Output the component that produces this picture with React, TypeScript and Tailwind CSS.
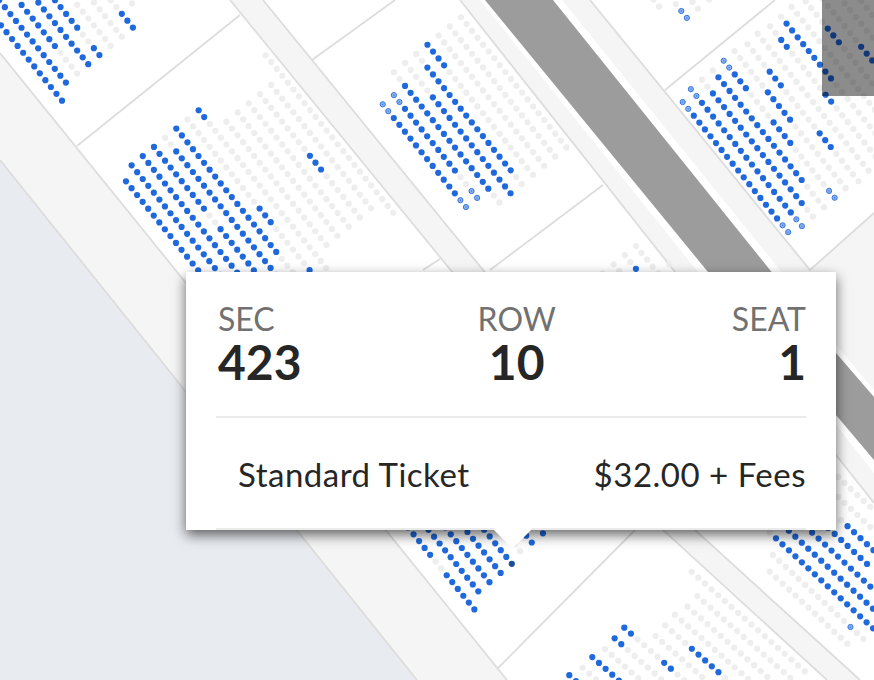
type Col = [number, number, string];

interface Section {
  o: [number, number];
  u: [number, number];
  v: [number, number];
  cols: Col[];
}

const U: [number, number] = [5.55, 6.85];
const V: [number, number] = [11.17, -9.17];

// each column is a run-length list of seats: b blue, g grey, r partly held, d selected
const sections: Section[] = [
  {
    o: [62, 100.7],
    u: U,
    v: V,
    cols: [
      [0, -12, "b13"],
      [1, -15.31, "b15"],
      [2, -11.31, "b7 g4"],
      [3, -10.31, "b10"],
      [4, -9.31, "b5 g2 b2"],
      [5, -7.31, "g7"],
      [6, -6.31, "g6"],
      [7, -5.31, "g2 b3"],
      [8, -3.49, "g1"],
    ],
  },
  {
    o: [126, 181.3],
    u: U,
    v: V,
    cols: [
      [0, 0, "b20"],
      [1, -1, "b21"],
      [2, -1, "b21"],
      [3, -1, "b10 g2 b10"],
      [4, -1, "g2 b20"],
      [5, -1, "b19 g4"],
      [6, -1, "g13 b3 g6 b1 g2"],
      [7, -1, "b2 g22"],
      [8, 2, "g19"],
      [9, 2, "g19"],
      [10, 2, "g19"],
      [11, 2, "g9 b3 g7"],
      [12, 2, "g19"],
      [13, -1, "g24"],
    ],
  },
  {
    o: [382.7, 104.3],
    u: U,
    v: V,
    cols: [
      [0, 0, "r2 b12 r2"],
      [1, 0, "r2 b10 g2 r2"],
      [2, -2, "g2 b16 g2"],
      [3, -2, "g5 b15"],
      [4, -2, "g2 b16 g2"],
      [5, -2, "b4 g16"],
      [6, -2, "g20"],
      [7, -2, "g20"],
      [8, -2, "g20"],
    ],
  },
  {
    o: [682.7, 102],
    u: U,
    v: V,
    cols: [
      [0, 0, "r2 b16 r2"],
      [1, -0.54, "r2 b17 r2"],
      [2, -0.58, "g2 b17 g2"],
      [3, -0.6, "g1 b16 g4"],
      [4, -0.67, "r2 b3 g4 b4 g6 r2"],
      [5, -0.72, "g6 b5 g10"],
      [6, -0.4, "g4 b3 g6 b3 g5"],
      [7, -0.6, "g21"],
      [8, -0.35, "g2 b2 g6 b2 g9"],
      [9, -0.4, "g1 b9 g10"],
      [10, -0.5, "g21"],
      [11, 0, "g4 b3 g12"],
      [12, 0, "g8 b3 g10"],
      [13, 0, "g20"],
      [14, 0, "g20"],
    ],
  },
  {
    o: [681.3, 11],
    u: U,
    v: V,
    cols: [
      [-1, -3, "g2"],
      [0, -1, "g1 r2"],
      [1, 0, "g2"],
      [2, 1, "g1"],
    ],
  },
  {
    o: [636, 246],
    u: U,
    v: V,
    cols: [
      [-3, 0, "g2"],
      [-2, 0, "g3"],
      [-1, 0, "g2 b1 g2"],
      [0, 0, "g5"],
      [1, 4, "g1"],
    ],
  },
  {
    o: [478.3, 591.3],
    u: [5.53, 6.83],
    v: V,
    cols: [
      [-1, -11.69, "b6 g2 b6"],
      [0, -10, "b11"],
      [1, -8, "b9"],
      [2, -7, "b8"],
      [3, -5, "b5 d1"],
      [4, -1.5, "g2"],
      [5, -1.43, "b2"],
      [6, -0.43, "b1"],
    ],
  },
  {
    o: [624.3, 627.7],
    u: [6.65, 5.85],
    v: [9.67, -10.67],
    cols: [
      [-5, -1, "b2 g6"],
      [-4, -0.45, "g8"],
      [-3, -0.45, "b5 g6"],
      [-2, 0, "g12"],
      [-1, 0, "b2 g12"],
      [0, 0, "b2 g4 b2 g12"],
      [1, 3.25, "g16"],
      [2, 3.25, "g4 b5 g8"],
      [3, 3.25, "g16"],
      [4, 3.7, "g16"],
      [5, 3.7, "g15"],
      [6, 1.4, "g18"],
    ],
  },
  {
    o: [776, 538.3],
    u: [6.47, 6],
    v: [3.17, -16.67],
    cols: [
      [-2, 0, "g13"],
      [-1, 0, "g12 r1 g2"],
      [0, -1, "g1 b16"],
      [1, 1.5, "b15"],
      [2, 3.6, "b11"],
      [3, 6.6, "b7"],
      [4, 8.1, "g1 b5"],
      [5.04, 7.11, "g6"],
      [6.06, 6.6, "g6"],
    ],
  },
];

function seatsOf(section: Section) {
  const seats: { x: number; y: number; kind: string }[] = [];
  for (const [j, s, runs] of section.cols) {
    let i = s;
    for (const run of runs.split(" ")) {
      const kind = run[0];
      const count = Number(run.slice(1));
      for (let n = 0; n < count; n++) {
        seats.push({
          x: section.o[0] + i * section.u[0] + j * section.v[0],
          y: section.o[1] + i * section.u[1] + j * section.v[1],
          kind,
        });
        i += 1;
      }
    }
  }
  return seats;
}

function Seat({ x, y, kind }: { x: number; y: number; kind: string }) {
  if (kind === "r") {
    return (
      <g>
        <circle cx={x} cy={y} r={2.6} fill="#8fb4ef" stroke="#3576e0" strokeWidth={1} />
        <circle cx={x} cy={y} r={0.7} fill="#3576e0" />
      </g>
    );
  }
  const fill = kind === "b" ? "#1f69dc" : kind === "d" ? "#1b4f9b" : "#eeeeee";
  return <circle cx={x} cy={y} r={3.1} fill={fill} />;
}

function SeatMap() {
  const line = { stroke: "#dddddd", strokeWidth: 1.8, fill: "none" };
  return (
    <svg className="absolute inset-0" width={874} height={680} viewBox="0 0 874 680">
      <rect width={874} height={680} fill="#ffffff" />
      {/* concourse and outer area */}
      <polygon points="0,53 507,680 417,680 0,160" fill="#f5f5f5" />
      <polygon points="0,160 417,680 0,680" fill="#e8ebf0" />
      <polygon points="230,0 263,0 695,530 860,680 827,680 663,530" fill="#f5f5f5" />
      <polygon points="460,0 480,0 698,272 836,425 874,473 874,503 836,455 675,272" fill="#f5f5f5" />
      <polygon points="562,0 590,0 810,270 874,213 874,390 836,345 780,270" fill="#f5f5f5" />
      {/* road */}
      <polygon points="485,0 553,0 770,270 836,353 874,397 874,460 836,415 708,272" fill="#9c9c9c" />
      {/* section edges */}
      <polyline points="0,53 507,680" {...line} />
      <polyline points="0,160 417,680" {...line} />
      <polyline points="230,0 663,530 827,680" {...line} />
      <polyline points="263,0 695,530 860,680" {...line} />
      <polyline points="460,0 675,272 836,455 874,503" {...line} />
      <polyline points="590,0 810,270 874,213" {...line} />
      <polyline points="77,146 240,15" {...line} />
      <polyline points="312,60 395,0" {...line} />
      <polyline points="423,270 440,259" {...line} />
      <polyline points="490,270 603,185" {...line} />
      <polyline points="665,90 775,0" {...line} />
      <polyline points="498,668 635,530" {...line} />
      {sections.map((section, a) =>
        seatsOf(section).map((seat, b) => <Seat key={`${a}-${b}`} {...seat} />),
      )}
    </svg>
  );
}

function Stat({ label, value, align }: { label: string; value: string; align: string }) {
  return (
    <div className={`flex flex-col ${align}`}>
      <div className="text-[32px] leading-[37px] text-[#717171]">{label}</div>
      <div className="text-[48px] leading-[50px] font-bold text-[#262626]">{value}</div>
    </div>
  );
}

export default function App() {
  return (
    <div className="relative w-[874px] h-[680px] overflow-hidden bg-white font-['Lato',sans-serif]">
      <SeatMap />
      <div className="absolute top-0 right-0 w-[52px] h-[96px] bg-black/45" />

      {/* seat tooltip */}
      <div className="absolute left-[186px] top-[272px] w-[650px] h-[258px] bg-white px-[30px] flex flex-col shadow-[0_5px_12px_rgba(0,0,0,0.6)]">
        <div className="flex justify-between pl-[2px] pr-0 pt-[28px] pb-[29px] border-b-2 border-[#ebebeb]">
          <Stat label="SEC" value="423" align="items-start" />
          <Stat label="ROW" value="10" align="items-center" />
          <Stat label="SEAT" value="1" align="items-end" />
        </div>
        <div className="flex flex-1 items-center justify-between pt-[3px] pl-[22px] border-b-2 border-[#ebebeb] text-[33px] tracking-[0.5px] text-[#262626]">
          <span>Standard Ticket</span>
          <span>$32.00 + Fees</span>
        </div>
        <div className="absolute left-[313px] -bottom-[13px] w-[27px] h-[27px] rotate-45 bg-white" />
      </div>
    </div>
  );
}
